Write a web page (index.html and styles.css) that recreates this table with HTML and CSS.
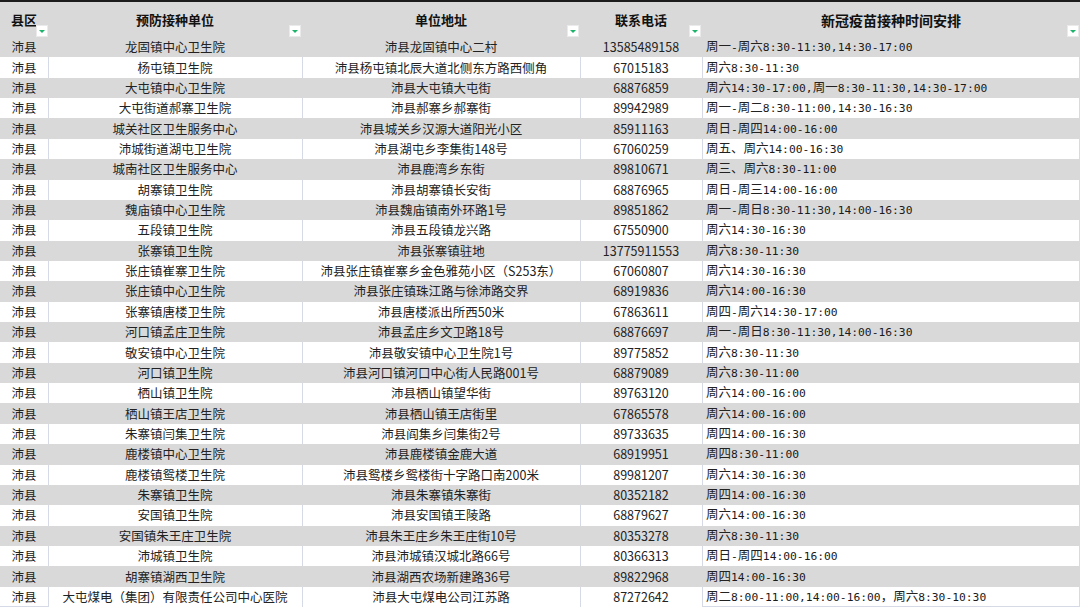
FILE: index.html
```html
<!DOCTYPE html>
<html lang="zh-CN">
<head>
<meta charset="utf-8">
<title>沛县新冠疫苗接种单位</title>
<link rel="stylesheet" href="styles.css">
</head>
<body>
<div class="topbar"></div>
<table class="sheet">
<colgroup>
<col class="c1"><col class="c2"><col class="c3"><col class="c4"><col class="c5">
</colgroup>
<thead>
<tr>
<th><span class="ht">县区</span><span class="flt"></span></th>
<th><span class="ht">预防接种单位</span><span class="flt"></span></th>
<th><span class="ht">单位地址</span><span class="flt"></span></th>
<th><span class="ht">联系电话</span><span class="flt"></span></th>
<th><span class="ht big">新冠疫苗接种时间安排</span><span class="flt"></span></th>
</tr>
</thead>
<tbody>
<tr><td>沛县</td><td>龙固镇中心卫生院</td><td>沛县龙固镇中心二村</td><td>13585489158</td><td>周一<span class="t">-</span>周六<span class="t">8:30-11:30,14:30-17:00</span></td></tr>
<tr><td>沛县</td><td>杨屯镇卫生院</td><td>沛县杨屯镇北辰大道北侧东方路西侧角</td><td>67015183</td><td>周六<span class="t">8:30-11:30</span></td></tr>
<tr><td>沛县</td><td>大屯镇中心卫生院</td><td>沛县大屯镇大屯街</td><td>68876859</td><td>周六<span class="t">14:30-17:00,</span>周一<span class="t">8:30-11:30,14:30-17:00</span></td></tr>
<tr><td>沛县</td><td>大屯街道郝寨卫生院</td><td>沛县郝寨乡郝寨街</td><td>89942989</td><td>周一<span class="t">-</span>周二<span class="t">8:30-11:00,14:30-16:30</span></td></tr>
<tr><td>沛县</td><td>城关社区卫生服务中心</td><td>沛县城关乡汉源大道阳光小区</td><td>85911163</td><td>周日<span class="t">-</span>周四<span class="t">14:00-16:00</span></td></tr>
<tr><td>沛县</td><td>沛城街道湖屯卫生院</td><td>沛县湖屯乡李集街148号</td><td>67060259</td><td>周五、周六<span class="t">14:00-16:30</span></td></tr>
<tr><td>沛县</td><td>城南社区卫生服务中心</td><td>沛县鹿湾乡东街</td><td>89810671</td><td>周三、周六<span class="t">8:30-11:00</span></td></tr>
<tr><td>沛县</td><td>胡寨镇卫生院</td><td>沛县胡寨镇长安街</td><td>68876965</td><td>周日<span class="t">-</span>周三<span class="t">14:00-16:00</span></td></tr>
<tr><td>沛县</td><td>魏庙镇中心卫生院</td><td>沛县魏庙镇南外环路1号</td><td>89851862</td><td>周一<span class="t">-</span>周日<span class="t">8:30-11:30,14:00-16:30</span></td></tr>
<tr><td>沛县</td><td>五段镇卫生院</td><td>沛县五段镇龙兴路</td><td>67550900</td><td>周六<span class="t">14:30-16:30</span></td></tr>
<tr><td>沛县</td><td>张寨镇卫生院</td><td>沛县张寨镇驻地</td><td>13775911553</td><td>周六<span class="t">8:30-11:30</span></td></tr>
<tr><td>沛县</td><td>张庄镇崔寨卫生院</td><td>沛县张庄镇崔寨乡金色雅苑小区（S253东）</td><td>67060807</td><td>周六<span class="t">14:30-16:30</span></td></tr>
<tr><td>沛县</td><td>张庄镇中心卫生院</td><td>沛县张庄镇珠江路与徐沛路交界</td><td>68919836</td><td>周六<span class="t">14:00-16:30</span></td></tr>
<tr><td>沛县</td><td>张寨镇唐楼卫生院</td><td>沛县唐楼派出所西50米</td><td>67863611</td><td>周四<span class="t">-</span>周六<span class="t">14:30-17:00</span></td></tr>
<tr><td>沛县</td><td>河口镇孟庄卫生院</td><td>沛县孟庄乡文卫路18号</td><td>68876697</td><td>周一<span class="t">-</span>周日<span class="t">8:30-11:30,14:00-16:30</span></td></tr>
<tr><td>沛县</td><td>敬安镇中心卫生院</td><td>沛县敬安镇中心卫生院1号</td><td>89775852</td><td>周六<span class="t">8:30-11:30</span></td></tr>
<tr><td>沛县</td><td>河口镇卫生院</td><td>沛县河口镇河口中心街人民路001号</td><td>68879089</td><td>周六<span class="t">8:30-11:00</span></td></tr>
<tr><td>沛县</td><td>栖山镇卫生院</td><td>沛县栖山镇望华街</td><td>89763120</td><td>周六<span class="t">14:00-16:00</span></td></tr>
<tr><td>沛县</td><td>栖山镇王店卫生院</td><td>沛县栖山镇王店街里</td><td>67865578</td><td>周六<span class="t">14:00-16:00</span></td></tr>
<tr><td>沛县</td><td>朱寨镇闫集卫生院</td><td>沛县阎集乡闫集街2号</td><td>89733635</td><td>周四<span class="t">14:00-16:30</span></td></tr>
<tr><td>沛县</td><td>鹿楼镇中心卫生院</td><td>沛县鹿楼镇金鹿大道</td><td>68919951</td><td>周四<span class="t">8:30-11:00</span></td></tr>
<tr><td>沛县</td><td>鹿楼镇鸳楼卫生院</td><td>沛县鸳楼乡鸳楼街十字路口南200米</td><td>89981207</td><td>周六<span class="t">14:30-16:30</span></td></tr>
<tr><td>沛县</td><td>朱寨镇卫生院</td><td>沛县朱寨镇朱寨街</td><td>80352182</td><td>周四<span class="t">14:00-16:30</span></td></tr>
<tr><td>沛县</td><td>安国镇卫生院</td><td>沛县安国镇王陵路</td><td>68879627</td><td>周六<span class="t">14:00-16:30</span></td></tr>
<tr><td>沛县</td><td>安国镇朱王庄卫生院</td><td>沛县朱王庄乡朱王庄街10号</td><td>80353278</td><td>周六<span class="t">8:30-11:30</span></td></tr>
<tr><td>沛县</td><td>沛城镇卫生院</td><td>沛县沛城镇汉城北路66号</td><td>80366313</td><td>周日<span class="t">-</span>周四<span class="t">14:00-16:00</span></td></tr>
<tr><td>沛县</td><td>胡寨镇湖西卫生院</td><td>沛县湖西农场新建路36号</td><td>89822968</td><td>周四<span class="t">14:00-16:30</span></td></tr>
<tr><td>沛县</td><td>大屯煤电（集团）有限责任公司中心医院</td><td>沛县大屯煤电公司江苏路</td><td>87272642</td><td>周二<span class="t">8:00-11:00,14:00-16:00</span>，周六<span class="t">8:30-10:30</span></td></tr>
</tbody>
</table>
</body>
</html>
```
FILE: styles.css
```css
html, body {
  margin: 0;
  padding: 0;
  background: #ffffff;
}
body {
  width: 1080px;
  height: 607px;
  overflow: hidden;
  font-family: "Noto Sans CJK SC", "Noto Sans", sans-serif;
  color: #1a1a1a;
}
.topbar {
  height: 2px;
  background: #1c1c1c;
}
.sheet {
  width: 1080px;
  table-layout: fixed;
  border-collapse: separate;
  border-spacing: 0;
}
.c1 { width: 48px; }
.c2 { width: 254px; }
.c3 { width: 278px; }
.c4 { width: 122px; }
.c5 { width: 378px; }

.sheet th {
  position: relative;
  height: 35px;
  padding: 0;
  background: #d9d9d9;
  vertical-align: top;
  text-align: center;
  font-weight: 700;
}
.sheet th:first-child {
  text-align: left;
}
.ht {
  display: block;
  padding-top: 10px;
  font-size: 13px;
  line-height: 16px;
  color: #111;
}
.sheet th:first-child .ht {
  padding-left: 11px;
}
.ht.big {
  font-size: 14px;
}
.flt {
  position: absolute;
  right: 2px;
  bottom: 1px;
  width: 10px;
  height: 10px;
  background: #ffffff;
  box-shadow: 0 0 0 1px #eaeaea;
}
.flt::after {
  content: "";
  position: absolute;
  left: 2px;
  top: 4px;
  border-left: 3px solid transparent;
  border-right: 3px solid transparent;
  border-top: 3px solid #1eb36a;
}
.sheet th:first-child .flt {
  right: 1px;
}

.sheet td {
  height: 20.36px;
  padding: 0;
  font-size: 12.5px;
  line-height: 14px;
  text-align: center;
  vertical-align: middle;
  white-space: nowrap;
  overflow: hidden;
  color: #222;
}
.sheet td:last-child {
  text-align: left;
  padding-left: 4px;
}
.t {
  font-family: "DejaVu Sans Mono", "Liberation Mono", monospace;
  font-size: 11.3px;
  color: #1a1a1a;
}
.sheet tbody tr:nth-child(odd) td {
  background: #d9d9d9;
}
.sheet tbody tr:nth-child(even) td {
  background: #ffffff;
}
.sheet tbody tr:nth-child(even) td + td {
  box-shadow: inset 1px 0 0 #d6d9e6;
}
.sheet tbody tr:nth-child(even) td:last-child {
  box-shadow: inset 1px 0 0 #d6d9e6, inset -1px 0 0 #d6d9e6;
}
.sheet tbody tr:last-child td {
  box-shadow: inset 1px 0 0 #d6d9e6, inset 0 -1px 0 #d6d9e6;
}
.sheet tbody tr:last-child td:first-child {
  box-shadow: inset 0 -1px 0 #d6d9e6;
}
.sheet tbody tr:last-child td:last-child {
  box-shadow: inset 1px 0 0 #d6d9e6, inset -1px 0 0 #d6d9e6, inset 0 -1px 0 #d6d9e6;
}
```
